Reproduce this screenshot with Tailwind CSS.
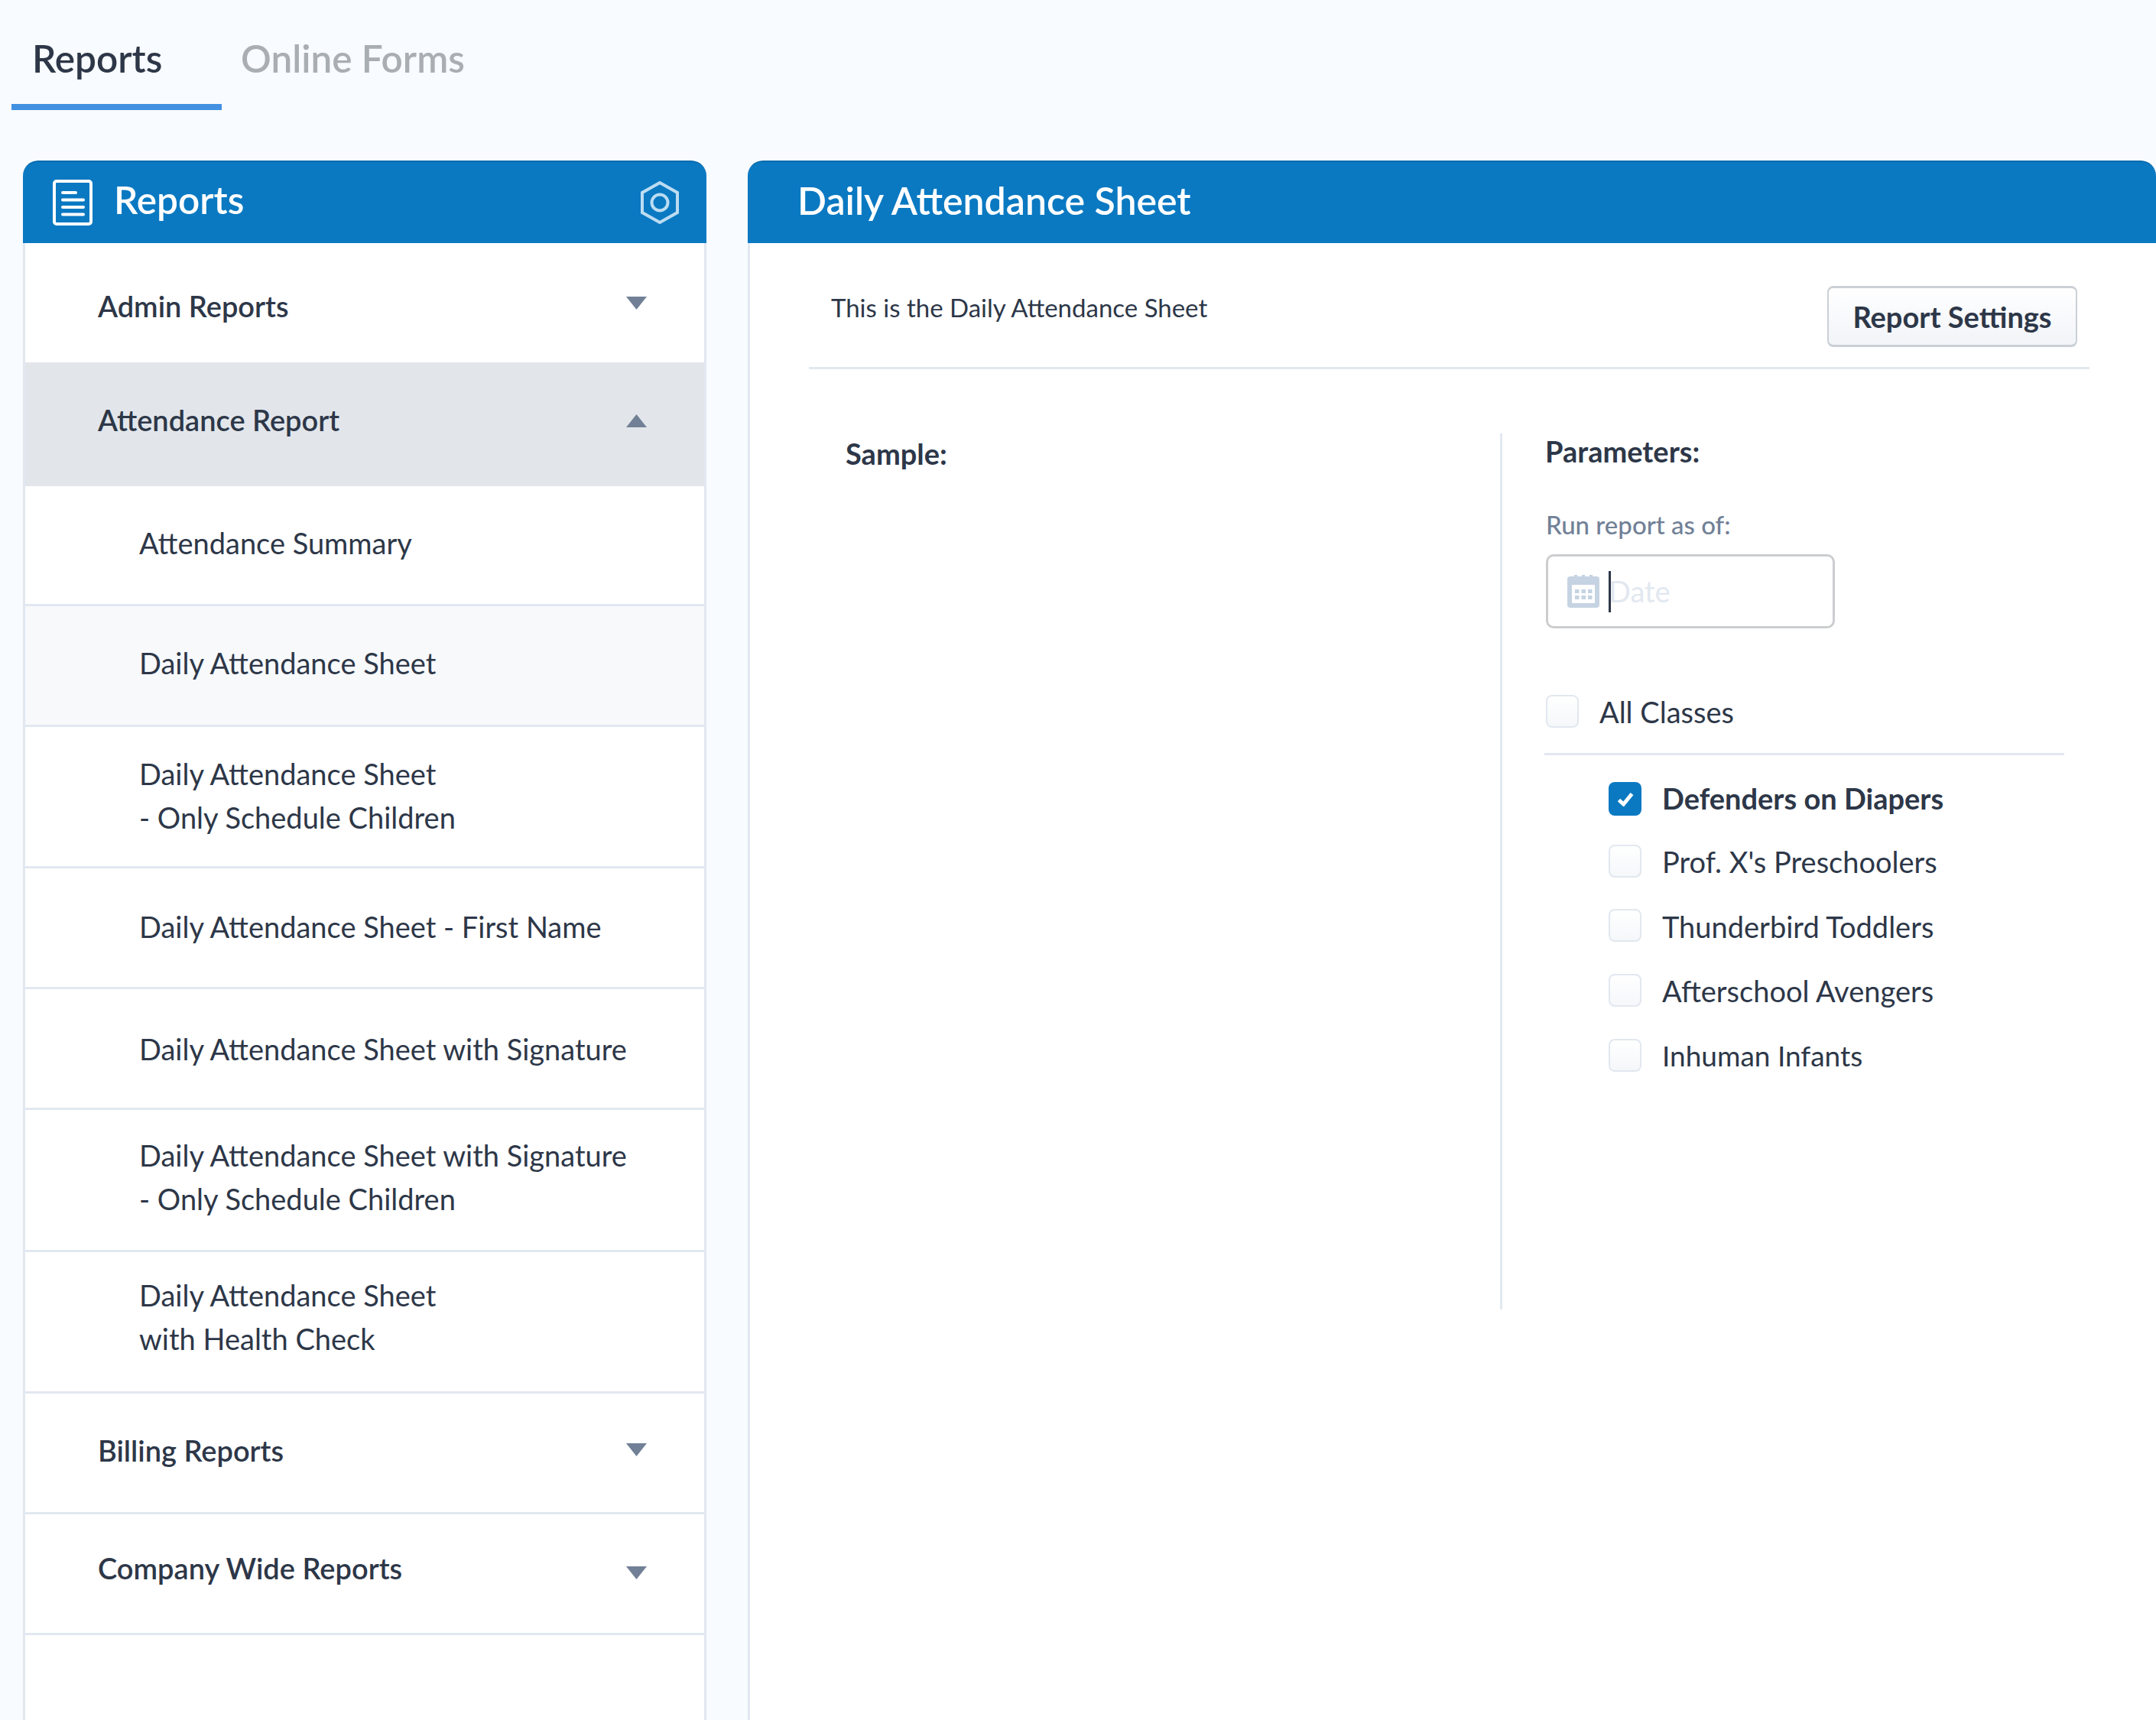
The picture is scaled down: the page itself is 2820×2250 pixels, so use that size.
<!DOCTYPE html>
<html lang="en">
  <head>
    <meta charset="UTF-8" />
    <script src="https://cdn.jsdelivr.net/npm/@tailwindcss/browser@4"></script>
    <title>Reports</title>
  </head>

  <body class="h-[2250px] overflow-hidden bg-[#f8fbff] font-['Lato',sans-serif] text-[#2d3748] flex flex-col">
    <!-- Tabs -->
    <nav class="flex h-[210px] items-start pl-[15px] pt-[44px] shrink-0">
      <div class="w-[275px] h-[100px] pl-[27px] pt-[2px] border-b-[8px] border-[#4290e2] text-[49.500px] leading-[60px] font-semibold">Reports</div>
      <div class="pl-[25px] pt-[2px] text-[49.500px] leading-[60px] text-[#a9aeb3] font-semibold">Online Forms</div>
    </nav>

    <main class="flex flex-1 min-h-0 pl-[30px] gap-[54px]">
      <!-- Left: report list -->
      <section class="w-[894px] shrink-0 flex flex-col">
        <header class="h-[108px] shrink-0 bg-[#0a79c2] rounded-t-[20px] border-t-2 border-[#086bad] flex items-center pl-[39px] pr-[36px] text-white">
          <svg class="w-[52px] h-[60px]" viewBox="0 0 52 60" fill="none" stroke="white" stroke-width="4" stroke-linecap="round">
            <rect x="2" y="2" width="48" height="56" rx="3" />
            <path d="M13 17H30M13 26.500H40M13 36H40M13 45.500H40" />
          </svg>
          <span class="ml-[28px] -mt-[7px] text-[49.500px] leading-none font-semibold">Reports</span>
          <svg class="ml-auto w-[50px] h-[56px]" viewBox="0 0 50 56" fill="none" stroke="#bcdcf2" stroke-width="4">
            <path d="M25 2L48 15V41L25 54L2 41V15Z" />
            <circle cx="25" cy="28" r="10.500" />
          </svg>
        </header>
        <div class="flex-1 bg-white border-x-[3px] border-[#e2e8f0] flex flex-col">
          <div class="h-[156px] flex items-center justify-between pl-[95px] pr-[75px] text-[38px] font-semibold">
            <span class="mt-[9px]">Admin Reports</span>
            <svg class="w-[27px] h-[17px]" viewBox="0 0 27 17"><path d="M0 0H27L13.500 17Z" fill="#718096" /></svg>
          </div>
          <div class="h-[162px] flex items-center justify-between pl-[95px] pr-[75px] bg-[#e2e6eb] text-[38px] font-semibold">
            <span class="-mt-[11px]">Attendance Report</span>
            <svg class="w-[27px] h-[17px] -mt-[10px]" viewBox="0 0 27 17"><path d="M0 17H27L13.500 0Z" fill="#718096" /></svg>
          </div>
          <div class="h-[157px] flex items-center pl-[149px] pb-[6px] border-b-[3px] border-[#e2e8f0] text-[38px]">Attendance Summary</div>
          <div class="h-[158px] flex items-center pl-[149px] pb-[6px] border-b-[3px] border-[#e2e8f0] bg-[#f7f9fb] text-[38px]">Daily Attendance Sheet</div>
          <div class="h-[185px] flex items-center pl-[149px] pb-[2px] border-b-[3px] border-[#e2e8f0] text-[38px] leading-[57px]">
            <span>Daily Attendance Sheet<br />- Only Schedule Children</span>
          </div>
          <div class="h-[158px] flex items-center pl-[149px] pb-[2px] border-b-[3px] border-[#e2e8f0] text-[38px]">Daily Attendance Sheet - First Name</div>
          <div class="h-[158px] flex items-center pl-[149px] pt-[2px] border-b-[3px] border-[#e2e8f0] text-[38px]">Daily Attendance Sheet with Signature</div>
          <div class="h-[186px] flex items-center pl-[149px] pb-[8px] border-b-[3px] border-[#e2e8f0] text-[38px] leading-[57px]">
            <span>Daily Attendance Sheet with Signature<br />- Only Schedule Children</span>
          </div>
          <div class="h-[185px] flex items-center pl-[149px] pb-[13px] border-b-[3px] border-[#e2e8f0] text-[38px] leading-[57px]">
            <span>Daily Attendance Sheet<br />with Health Check</span>
          </div>
          <div class="h-[158px] flex items-center justify-between pl-[95px] pr-[75px] border-b-[3px] border-[#e2e8f0] text-[38px] font-semibold">
            <span class="-mt-[6px]">Billing Reports</span>
            <svg class="w-[27px] h-[17px] -mt-[8px]" viewBox="0 0 27 17"><path d="M0 0H27L13.500 17Z" fill="#718096" /></svg>
          </div>
          <div class="h-[158px] flex items-center justify-between pl-[95px] pr-[75px] border-b-[3px] border-[#e2e8f0] text-[38px] font-semibold">
            <span class="-mt-[14px]">Company Wide Reports</span>
            <svg class="w-[27px] h-[17px] -mt-[2px]" viewBox="0 0 27 17"><path d="M0 0H27L13.500 17Z" fill="#718096" /></svg>
          </div>
        </div>
      </section>

      <!-- Right: report detail -->
      <section class="flex-1 min-w-0 flex flex-col">
        <header class="h-[108px] shrink-0 bg-[#0a79c2] rounded-t-[20px] border-t-2 border-[#086bad] flex items-center pl-[65px] text-white text-[50px] font-semibold">
          <span class="-mt-[5px]">Daily Attendance Sheet</span>
        </header>
        <div class="flex-1 bg-white border-l-[3px] border-[#e2e8f0]">
          <div class="ml-[77px] w-[1675px] h-[165px] flex justify-between items-start border-b-[3px] border-[#e2e8f0] pl-[29px] pr-[16px] pt-[56px]">
            <p class="text-[33px] leading-[58px] -mt-[1px]">This is the Daily Attendance Sheet</p>
            <button class="w-[327px] h-[80px] rounded-[8px] border-2 border-[#cbd0d6] border-t-[3px] border-b-[3px] bg-gradient-to-b from-white to-[#f1f4f8] text-[38px] font-bold">Report Settings</button>
          </div>
          <div class="flex">
            <div class="w-[981px] shrink-0 pl-[125px] pt-[83px]">
              <h3 class="text-[38px] leading-[54px] font-bold">Sample:</h3>
            </div>
            <div class="mt-[84px] h-[1146px] border-l-[3px] border-[#e2e8f0] pl-[57px] w-[740px]">
              <h3 class="text-[38px] leading-[54px] font-bold -mt-[4px] -ml-[1px]">Parameters:</h3>
              <p class="mt-[45px] text-[33px] leading-[48px] font-medium text-[#718096]">Run report as of:</p>
              <div class="mt-[15px] w-[378px] h-[97px] rounded-[10px] border-[3px] border-[#cbcdcf] flex items-center pl-[25px]">
                <svg class="w-[42px] h-[43px]" viewBox="0 0 42 43">
                  <path fill="#c5d3e2" fill-rule="evenodd" d="M4 2H9V0H13V2H19V0H23V2H29V0H33V2H38A4 4 0 0 1 42 6V39A4 4 0 0 1 38 43H4A4 4 0 0 1 0 39V6A4 4 0 0 1 4 2ZM7 13A1 1 0 0 0 6 14V36A1 1 0 0 0 7 37H35A1 1 0 0 0 36 36V14A1 1 0 0 0 35 13Z" />
                  <path fill="#c5d3e2" d="M10 19H15.500V24H10ZM18.500 19H24V24H18.500ZM27 19H32.500V24H27ZM10 27H15.500V32H10ZM18.500 27H24V32H18.500ZM27 27H32.500V32H27Z" />
                </svg>
                <span class="ml-[12px] w-[3px] h-[54px] bg-[#2d3748]"></span>
                <span class="-ml-[3px] text-[38px] text-[#e2e8f0]">Date</span>
              </div>
              <div class="mt-[87px] w-[680px] h-[79px] -ml-[2px] pl-[2px] border-b-[3px] border-[#e2e8f0] flex items-start">
                <span class="w-[43px] h-[43px] rounded-[8px] border-2 border-[#e2e8f0] bg-gradient-to-b from-white to-[#f5f7fa]"></span>
                <span class="ml-[27px] -mt-[2px] text-[38px] leading-[48px]">All Classes</span>
              </div>
              <ul class="mt-[35px] pl-[82px] text-[38px] leading-[48px]">
                <li class="h-[82px] flex items-start">
                  <span class="w-[43px] h-[44px] rounded-[8px] bg-[#0a79c2] flex items-center justify-center">
                    <svg class="w-[22px] h-[19px]" viewBox="0 0 22 19" fill="none" stroke="white" stroke-width="5"><path d="M2.500 10.500L8.500 16L19.500 2.500" /></svg>
                  </span>
                  <span class="ml-[27px] -mt-[3px] font-bold">Defenders on Diapers</span>
                </li>
                <li class="h-[84px] flex items-start">
                  <span class="w-[43px] h-[43px] rounded-[8px] border-2 border-[#e2e8f0] bg-gradient-to-b from-white to-[#f5f7fa]"></span>
                  <span class="ml-[27px] -mt-[2px]">Prof. X's Preschoolers</span>
                </li>
                <li class="h-[85px] flex items-start">
                  <span class="w-[43px] h-[43px] rounded-[8px] border-2 border-[#e2e8f0] bg-gradient-to-b from-white to-[#f5f7fa]"></span>
                  <span class="ml-[27px] -mt-[1px]">Thunderbird Toddlers</span>
                </li>
                <li class="h-[85px] flex items-start">
                  <span class="w-[43px] h-[43px] rounded-[8px] border-2 border-[#e2e8f0] bg-gradient-to-b from-white to-[#f5f7fa]"></span>
                  <span class="ml-[27px] -mt-[2px]">Afterschool Avengers</span>
                </li>
                <li class="h-[85px] flex items-start">
                  <span class="w-[43px] h-[43px] rounded-[8px] border-2 border-[#e2e8f0] bg-gradient-to-b from-white to-[#f5f7fa]"></span>
                  <span class="ml-[27px] -mt-[2px] text-[37px]">Inhuman Infants</span>
                </li>
              </ul>
            </div>
          </div>
        </div>
      </section>
    </main>
  </body>
</html>
